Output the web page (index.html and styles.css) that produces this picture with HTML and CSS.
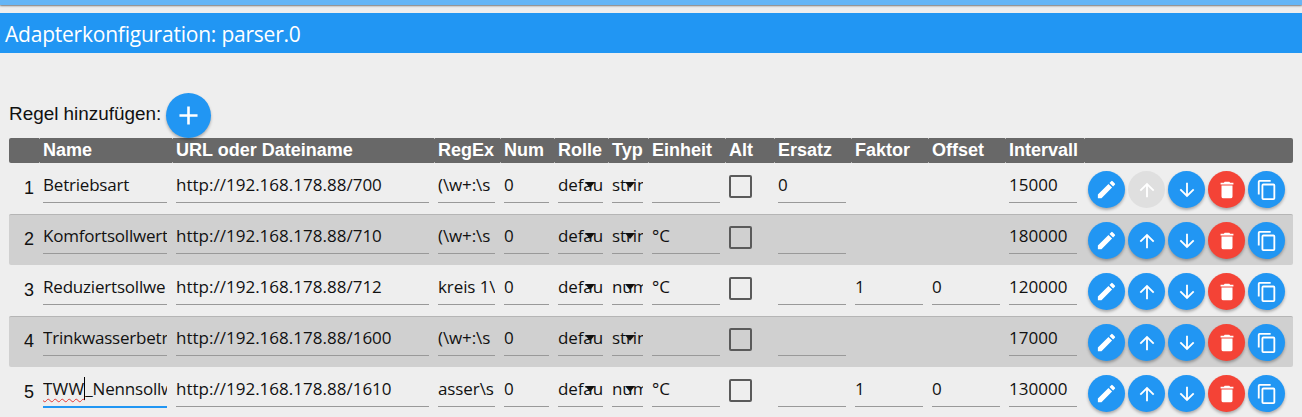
FILE: index.html
```
<!DOCTYPE html>
<html lang="de">
<head>
<meta charset="utf-8">
<title>Adapterkonfiguration: parser.0</title>
<link rel="stylesheet" href="styles.css">
</head>
<body>
<svg class="sprite" aria-hidden="true">
<symbol id="edit" viewBox="0 0 24 24"><path d="M3 17.25V21h3.75L17.81 9.94l-3.75-3.75L3 17.25zM20.71 7.04a1 1 0 0 0 0-1.41l-2.34-2.34a1 1 0 0 0-1.41 0l-1.83 1.83 3.75 3.75 1.83-1.83z"/></symbol>
<symbol id="up" viewBox="0 0 24 24"><path d="M4 12l1.41 1.41L11 7.83V20h2V7.83l5.58 5.59L20 12l-8-8-8 8z"/></symbol>
<symbol id="down" viewBox="0 0 24 24"><path d="M20 12l-1.41-1.41L13 16.17V4h-2v12.17l-5.58-5.59L4 12l8 8 8-8z"/></symbol>
<symbol id="trash" viewBox="0 0 24 24"><path d="M6 19a2 2 0 0 0 2 2h8a2 2 0 0 0 2-2V7H6v12zM19 4h-3.5l-1-1h-5l-1 1H5v2h14V4z"/></symbol>
<symbol id="copy" viewBox="0 0 24 24"><path d="M16 1H4a2 2 0 0 0-2 2v14h2V3h12V1zm3 4H8a2 2 0 0 0-2 2v14a2 2 0 0 0 2 2h11a2 2 0 0 0 2-2V7a2 2 0 0 0-2-2zm0 16H8V7h11v14z"/></symbol>
<symbol id="plus" viewBox="0 0 24 24"><path d="M19 13h-6v6h-2v-6H5v-2h6V5h2v6h6v2z"/></symbol>
</svg>
<div class="topbar"></div>
<h1 class="title"><span class="title-text">Adapterkonfiguration: parser.0</span></h1>
<main class="content">
<div class="add"><span class="add-label">Regel hinzufügen:</span><button class="btn btn-add"><svg><use href="#plus"/></svg></button></div>
<div class="table">
<div class="row head"><div></div><div>Name</div><div>URL oder Dateiname</div><div>RegEx</div><div>Num</div><div>Rolle</div><div>Typ</div><div>Einheit</div><div>Alt</div><div>Ersatz</div><div>Faktor</div><div>Offset</div><div>Intervall</div><div></div></div>

<div class="row">
<div class="no">1</div><div class="field">Betriebsart</div><div class="field url">http://192.168.178.88/700</div><div class="field">(\w+:\s</div><div class="field">0</div><div class="field select">defau</div><div class="field select">strin</div><div class="field"></div><div class="check"></div><div class="field">0</div><div></div><div></div><div class="field">15000</div>
<div class="actions"><button class="btn"><svg class="big"><use href="#edit"/></svg></button><button class="btn off"><svg><use href="#up"/></svg></button><button class="btn"><svg><use href="#down"/></svg></button><button class="btn red"><svg><use href="#trash"/></svg></button><button class="btn"><svg><use href="#copy"/></svg></button></div>
</div>

<div class="row alt">
<div class="no">2</div><div class="field">Komfortsollwert</div><div class="field url">http://192.168.178.88/710</div><div class="field">(\w+:\s</div><div class="field">0</div><div class="field select">defau</div><div class="field select">strin</div><div class="field">°C</div><div class="check"></div><div class="field"></div><div></div><div></div><div class="field">180000</div>
<div class="actions"><button class="btn"><svg class="big"><use href="#edit"/></svg></button><button class="btn"><svg><use href="#up"/></svg></button><button class="btn"><svg><use href="#down"/></svg></button><button class="btn red"><svg><use href="#trash"/></svg></button><button class="btn"><svg><use href="#copy"/></svg></button></div>
</div>

<div class="row">
<div class="no">3</div><div class="field">Reduziertsollwe</div><div class="field url">http://192.168.178.88/712</div><div class="field">kreis 1\</div><div class="field">0</div><div class="field select">defau</div><div class="field select">num</div><div class="field">°C</div><div class="check"></div><div class="field"></div><div class="field">1</div><div class="field">0</div><div class="field">120000</div>
<div class="actions"><button class="btn"><svg class="big"><use href="#edit"/></svg></button><button class="btn"><svg><use href="#up"/></svg></button><button class="btn"><svg><use href="#down"/></svg></button><button class="btn red"><svg><use href="#trash"/></svg></button><button class="btn"><svg><use href="#copy"/></svg></button></div>
</div>

<div class="row alt">
<div class="no">4</div><div class="field">Trinkwasserbetr</div><div class="field url">http://192.168.178.88/1600</div><div class="field">(\w+:\s</div><div class="field">0</div><div class="field select">defau</div><div class="field select">strin</div><div class="field"></div><div class="check"></div><div class="field"></div><div></div><div></div><div class="field">17000</div>
<div class="actions"><button class="btn"><svg class="big"><use href="#edit"/></svg></button><button class="btn"><svg><use href="#up"/></svg></button><button class="btn"><svg><use href="#down"/></svg></button><button class="btn red"><svg><use href="#trash"/></svg></button><button class="btn"><svg><use href="#copy"/></svg></button></div>
</div>

<div class="row">
<div class="no">5</div><div class="field focus"><span class="typo">TWW</span>_Nennsollw</div><div class="field url">http://192.168.178.88/1610</div><div class="field">asser\s</div><div class="field">0</div><div class="field select">defau</div><div class="field select">num</div><div class="field">°C</div><div class="check"></div><div class="field"></div><div class="field">1</div><div class="field">0</div><div class="field">130000</div>
<div class="actions"><button class="btn"><svg class="big"><use href="#edit"/></svg></button><button class="btn"><svg><use href="#up"/></svg></button><button class="btn"><svg><use href="#down"/></svg></button><button class="btn red"><svg><use href="#trash"/></svg></button><button class="btn"><svg><use href="#copy"/></svg></button></div>
</div>
</div>
</main>
</body>
</html>
```
FILE: styles.css
```
* { box-sizing: border-box; }
body { margin: 0; height: 417px; overflow: hidden; background: #eee; color: #111; font-family: "Liberation Sans", Arial, sans-serif; }
.sprite { display: none; }
.topbar { height: 5px; background: #64b5f6; box-shadow: 0 1px 2px #777; }
.title { margin: 8px 0 0; height: 40px; padding-left: 5px; background: #2196f3; color: #fff; font: 400 21px/42px "Open Sans", "Noto Sans", sans-serif; white-space: nowrap; }
.title-text { letter-spacing: -0.22px; }
.content { padding: 40px 9px 0; }
.add { display: flex; gap: 6px; height: 45px; }
.add-label { width: 151px; font-size: 18.9px; line-height: 41px; white-space: nowrap; }
.btn { display: flex; flex: none; align-items: center; justify-content: center; width: 37px; height: 37px; padding: 0; border: 0; border-radius: 50%; background: #2196f3; box-shadow: 0 2px 3px rgba(0, 0, 0, .28); }
.btn svg { width: 22px; height: 22px; fill: #fff; }
.btn svg.big { width: 23px; height: 23px; }
.btn.red { background: #f44336; }
.btn.off { background: #dfdfdf; box-shadow: none; }
.btn-add { width: 45px; height: 45px; }
.btn.btn-add svg { width: 31px; height: 31px; }
.table { width: 1284px; }
.row { display: grid; grid-template-columns: 30px 133px 262px 66px 54px 54px 40px 77px 49px 77px 77px 77px 79px 209px; height: 51px; }
.head { height: 25px; background: #686868; border-radius: 2px; color: #fff; font-weight: 700; font-size: 18px; line-height: 24px; white-space: nowrap; }
.head > div { padding-left: 4px; }
.head > div + div { background: radial-gradient(circle at 0 0, #ccc 0.5px, transparent 1.5px) no-repeat, radial-gradient(circle at 0 100%, #ccc 0.5px, transparent 1.5px) no-repeat; }
.alt { background: #d0d0d0; border-top: 1px solid #b5b5b5; border-radius: 2px; }
.alt > div { position: relative; top: -1px; }
.no { padding-right: 5px; text-align: right; font-size: 18px; line-height: 50px; }
.field { height: 34px; margin: 6px 5px 0 4px; border-bottom: 1px solid #999; font: 400 17px/32px "Open Sans", "Noto Sans", sans-serif; letter-spacing: -0.1px; white-space: nowrap; overflow: hidden; }
.field:nth-child(2) { letter-spacing: -0.2px; }
.field.url { letter-spacing: 0.01px; }
.field:nth-child(13) { margin-right: 7px; letter-spacing: 0.05px; }
.field.select { position: relative; }
.select::after { content: ""; position: absolute; right: 8px; top: 13px; border: 5px solid transparent; border-top: 6px solid #111; border-bottom: 0; }
.focus { height: 35px; border-bottom: 2px solid #2196f3; }
.typo { border-right: 1px solid #000; letter-spacing: 0.2px; text-decoration: underline wavy #e53935 1px; text-underline-offset: 3px; }
.check { width: 23px; height: 23px; margin: 12px 0 0 4px; border: 2px solid #5a5a5a; border-radius: 2px; }
.actions { display: flex; gap: 3px; padding: 8px 0 0 4px; }
```
